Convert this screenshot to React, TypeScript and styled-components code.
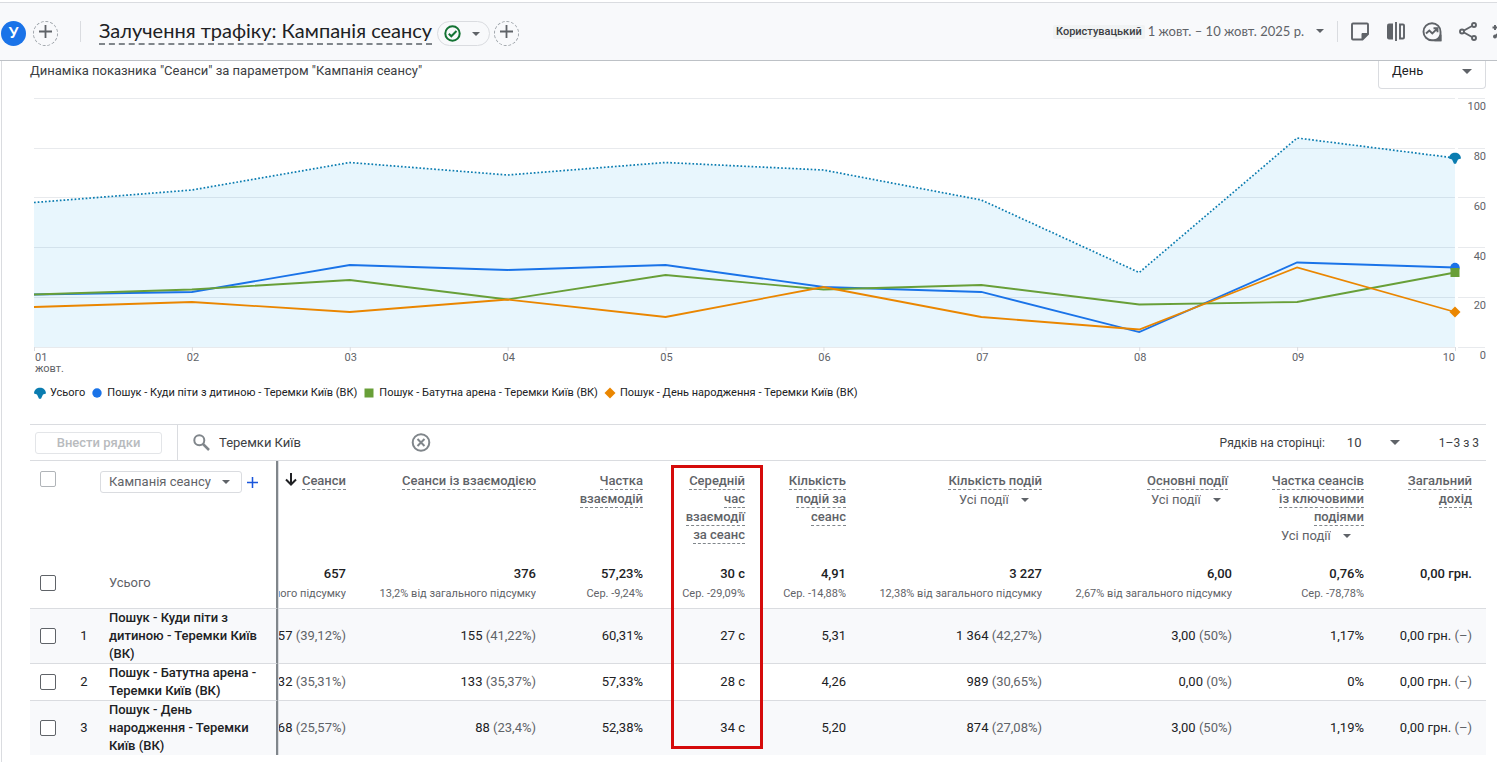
import React from "react";
import styled, { createGlobalStyle, css } from "styled-components";

const Global = createGlobalStyle`
  * { box-sizing: border-box; }
  body { margin: 0; background: #fff; color: #202124; font-family: Roboto, "Liberation Sans", sans-serif; font-size: 13px; line-height: 18px; overflow-x: hidden; }
  button, input, select { font: inherit; color: inherit; margin: 0; }
`;

const Header = styled.header`
  display: flex;
  align-items: center;
  justify-content: space-between;
  margin-top: 2px;
  height: 59px;
  padding-left: 1px;
  border-top: 1px solid #dadce0;
  border-bottom: 1px solid #bdc1c6;
  background: #f8f9fb;
  overflow: hidden;
`;
const HeaderGroup = styled.div`
  display: flex;
  align-items: center;
  white-space: nowrap;
`;
const Avatar = styled.button`
  width: 25px;
  height: 25px;
  margin-top: 4px;
  padding: 0 0 3px;
  border: 0;
  border-radius: 50%;
  background: #1a73e8;
  color: #fff;
  font-family: Lato, sans-serif;
  font-size: 15px;
  font-weight: 700;
`;
const AddButton = styled.button<{ $spaced?: boolean }>`
  display: grid;
  place-items: center;
  width: 25px;
  height: 25px;
  margin-top: 4px;
  ${(p) => p.$spaced && "margin-left: 7px; margin-right: 22px;"}
  padding: 0 0 4px;
  border: 1px dashed #9aa0a6;
  border-radius: 50%;
  background: none;
  color: #5f6368;
`;
const Divider = styled.span`
  width: 1px;
  height: 21px;
  background: #dadce0;
`;
const Title = styled.h1`
  margin: 0 5px 0 18px;
  padding-bottom: 1px;
  border-bottom: 2px dashed #80868b;
  font-family: Lato, Roboto, sans-serif;
  font-size: 20px;
  line-height: 24px;
  font-weight: 400;
`;
const StatusPill = styled.button`
  display: flex;
  align-items: center;
  justify-content: space-between;
  width: 53px;
  height: 25px;
  margin: 4px 4px 0 0;
  padding: 0 9px 0 6px;
  border: 1px solid #dadce0;
  border-radius: 13px;
  background: none;
  color: #5f6368;
`;
const RangeTag = styled.span`
  padding: 0 3px;
  border-radius: 2px;
  background: #f1f3f4;
  font-size: 11px;
  line-height: 14px;
  font-weight: 500;
  color: #3c4043;
`;
const DateButton = styled.button`
  display: flex;
  align-items: center;
  gap: 12px;
  margin: 0 13px 0 3px;
  padding: 0 0 1px;
  border: 0;
  background: none;
  font-family: Lato, Roboto, sans-serif;
  color: #5f6368;
`;
const Tools = styled.div`
  display: flex;
  align-items: center;
  gap: 12px;
  margin: 0 -19px 0 10px;
`;
const IconButton = styled.button`
  display: grid;
  place-items: center;
  width: 24px;
  height: 24px;
  padding: 0;
  border: 0;
  background: none;
  color: #5f6368;
`;

const Card = styled.main`
  margin-left: 1px;
  border-left: 1px solid #dadce0;
  padding: 0 11px 7px 28px;
`;
const ChartHead = styled.div`
  display: flex;
  align-items: flex-start;
  justify-content: space-between;
`;
const ChartTitle = styled.h2`
  margin: 1px 0 0;
  font-size: 13px;
  line-height: 18px;
  font-weight: 400;
  color: #3c4043;
`;
const SelectWrap = styled.span`
  display: inline-flex;
  align-items: center;
  svg { flex: none; pointer-events: none; color: #5f6368; }
`;
const BareSelect = styled.select`
  appearance: none;
  border: 0;
  padding: 0;
  background: none;
`;
const PeriodBox = styled(SelectWrap)`
  justify-content: space-between;
  width: 108px;
  height: 28px;
  padding: 0 13px 7px;
  border: 1px solid #dadce0;
  border-top: 0;
  border-radius: 0 0 4px 4px;
`;

const Chart = styled.svg`
  display: block;
  width: 100%;
  height: 290px;
  overflow: visible;
  font-size: 11px;
  fill: #5f6368;
`;
const Plot = styled.svg`
  width: calc(100% - 35px);
  overflow: visible;
`;
const Legend = styled.ul`
  display: flex;
  flex-wrap: wrap;
  gap: 6px;
  margin: 0;
  padding: 5px 0 22px 4px;
  list-style: none;
`;
const LegendItem = styled.li`
  display: flex;
  align-items: center;
  gap: 4px;
  font-size: 11px;
  line-height: 18px;
  svg { overflow: visible; }
`;

const Toolbar = styled.div`
  display: flex;
  align-items: center;
  height: 37px;
  border: solid #dadce0;
  border-width: 1px 0;
`;
const PlotButton = styled.button`
  width: 127px;
  height: 22px;
  margin: 0 15px 0 5px;
  padding: 0;
  border: 1px solid #e3e5e8;
  border-radius: 3px;
  background: #fff;
  font-weight: 500;
  color: #b8bbbe;
`;
const SearchBox = styled.div`
  display: flex;
  flex: 1;
  align-items: center;
  height: 100%;
  padding-left: 15px;
  border-left: 1px solid #dadce0;
  color: #80868b;
`;
const SearchInput = styled.input`
  width: 190px;
  padding: 0;
  margin-left: 9px;
  border: 0;
  outline: 0;
  background: none;
  color: #3c4043;
`;
const Pager = styled.div`
  display: flex;
  align-items: center;
  padding-right: 7px;
  font-size: 12px;
  color: #3c4043;
`;
const PageSize = styled(SelectWrap)`
  justify-content: space-between;
  width: 53px;
  margin: 0 39px 0 22px;
  font-size: 13px;
`;

const Table = styled.table`
  width: 100%;
  table-layout: fixed;
  border-collapse: separate;
  border-spacing: 0;
`;
const cell = css<{ $first?: boolean }>`
  padding: 0 14px 0 0;
  text-align: right;
  ${(p) => p.$first && "border-left: 1px solid #dadce0;"}
`;
const Metric = styled.th<{ $first?: boolean; $inset?: boolean }>`
  ${cell}
  position: relative;
  z-index: 1;
  height: 97px;
  padding-top: 11px;
  ${(p) => p.$inset && "padding-right: 18px;"}
  vertical-align: top;
  font-weight: 500;
  white-space: nowrap;
  color: #5f6368;
`;
const MetricLabel = styled.span`
  padding-bottom: 1px;
  border-bottom: 1px dashed #80868b;
`;
const EventFilter = styled(SelectWrap)<{ $inset?: boolean }>`
  display: flex;
  justify-content: flex-end;
  gap: 12px;
  margin: 1px ${(p) => (p.$inset ? 7 : 13)}px 0 0;
  font-weight: 400;
`;
const SortIcon = styled.span`
  margin-right: 5px;
  color: #202124;
  svg { vertical-align: -1px; }
`;
const CheckCell = styled.td`
  padding: 0 0 0 10px;
`;
const IndexCell = styled.td`
  padding: 0;
  text-align: center;
`;
const NameCell = styled.td<{ $plain?: boolean }>`
  padding: 0 8px 0 7px;
  border-right: 2px solid #80868b;
  font-weight: ${(p) => (p.$plain ? 400 : 500)};
  color: ${(p) => (p.$plain ? "#5f6368" : "#202124")};
`;
const ValueCell = styled.td<{ $first?: boolean }>`
  ${cell}
`;
const Clip = styled.div`
  display: flex;
  flex-direction: column;
  align-items: flex-end;
  overflow: hidden;
  white-space: nowrap;
`;
const TotalClip = styled(Clip)`
  padding-top: 4px;
`;
const TotalValue = styled.strong`
  font-weight: 500;
`;
const Note = styled.span`
  font-size: 11px;
  line-height: 22px;
  color: #5f6368;
`;
const Share = styled.span`
  color: #5f6368;
`;
const HeadRow = styled.tr`
  ${CheckCell}, ${NameCell} { vertical-align: top; padding-top: 10px; }
`;
const TotalRow = styled.tr`
  height: 51px;
  td { border-bottom: 1px solid #dadce0; }
`;
const DataRow = styled.tr`
  &:nth-child(even) { background: #f8f9fb; }
  &:not(:last-child) td { border-bottom: 1px solid #dadce0; }
`;
const CheckBox = styled.input<{ $light?: boolean }>`
  appearance: none;
  display: block;
  width: 16px;
  height: 16px;
  border: 1px solid ${(p) => (p.$light ? "#b0b4b8" : "#5f6368")};
  border-radius: 2px;
  background: #fff;
`;
const DimensionBar = styled.div`
  display: flex;
  align-items: center;
  gap: 3px;
  margin-left: -9px;
`;
const DimensionBox = styled(SelectWrap)`
  justify-content: space-between;
  width: 142px;
  height: 22px;
  padding: 0 11px 0 8px;
  border: 1px solid #dadce0;
  border-radius: 3px;
  color: #5f6368;
`;
const PlusButton = styled(IconButton)`
  width: 14px;
  height: 14px;
  color: #1a56db;
`;
const Highlight = styled.span`
  position: absolute;
  top: 4px;
  left: 14px;
  right: -4px;
  height: 284px;
  border: 3px solid #d50b0b;
  pointer-events: none;
`;

const Caret = ({ size = 8 }: { size?: number }) => (
  <svg width={size} height={size / 2} viewBox="0 0 8 4" fill="currentColor" aria-hidden="true">
    <path d="M0 0h8L4 4z" />
  </svg>
);
const Plus = ({ size = 13 }: { size?: number }) => (
  <svg width={size} height={size} viewBox="0 0 13 13" stroke="currentColor" strokeWidth="1.8" aria-hidden="true">
    <path d="M0 6.5h13M6.5 0v13" />
  </svg>
);

type Shape = "umbrella" | "circle" | "square" | "diamond";
const Mark = ({ shape }: { shape: Shape }) => {
  if (shape === "umbrella") return <path d="M-6 .5C-5.700-3.500-3-5.200 0-5.200S5.700-3.500 6 .5L3 1.500 1 5.800h-2L-3 1.500z" fill="#0a7cb0" />;
  if (shape === "circle") return <circle r="4.7" fill="#1a73e8" />;
  if (shape === "square") return <path d="M-4.500-4.500h9v9h-9z" fill="#689f38" />;
  return <path d="M0-5.500L5.500 0 0 5.500-5.500 0z" fill="#ea8600" />;
};

const series: { name: string; shape: Shape; color: string; values: number[] }[] = [
  { name: "Усього", shape: "umbrella", color: "#0a7cb0", values: [58, 63, 74, 69, 74, 71, 59, 30, 84, 76] },
  { name: "Пошук - Куди піти з дитиною - Теремки Київ (ВК)", shape: "circle", color: "#1a73e8", values: [21, 22, 33, 31, 33, 24, 22, 6, 34, 32] },
  { name: "Пошук - Батутна арена - Теремки Київ (ВК)", shape: "square", color: "#689f38", values: [21, 23, 27, 19, 29, 23, 25, 17, 18, 30] },
  { name: "Пошук - День народження - Теремки Київ (ВК)", shape: "diamond", color: "#ea8600", values: [16, 18, 14, 19, 12, 24, 12, 7, 32, 14] },
];

/* The plot spans the card less 4px on the left and 31px for the scale on the right. */
const TOP = 9;
const PLOT = 249;
const BASE = TOP + PLOT;
const TICKS = [0, 20, 40, 60, 80, 100];
const yOf = (v: number) => Math.round((BASE - (v * PLOT) / 100) * 2) / 2;
const gridY = (v: number) => Math.floor(yOf(v)) + 0.5;
const pointsOf = (values: number[]) => values.map((v, i) => `${i * 100},${yOf(v)}`).join(" ");

const TrafficChart = () => (
  <Chart role="img" aria-label="Динаміка сеансів">
    <Plot x="4" y="0" height="290">
      {TICKS.map((v) => (
        <line key={v} x1="0" x2="100%" y1={gridY(v)} y2={gridY(v)} stroke="#e8eaed" />
      ))}
      <svg width="100%" height="290" viewBox="0 0 900 290" preserveAspectRatio="none" overflow="visible">
        <polygon points={`0,${BASE} ${pointsOf(series[0].values)} 900,${BASE}`} fill="#039be5" fillOpacity="0.09" />
        {series.map((s, i) => (
          <polyline
            key={s.name}
            points={pointsOf(s.values)}
            fill="none"
            stroke={s.color}
            strokeWidth={i ? 1.8 : 1.7}
            strokeDasharray={i ? undefined : "1.7 2"}
            vectorEffect="non-scaling-stroke"
          />
        ))}
      </svg>
      {series[0].values.map((_, i) => (
        <svg key={i} x={`${(i * 100) / 9}%`} overflow="visible">
          <path d={`M.5 ${BASE}v4`} stroke="#dadce0" />
          <text x={i === 9 ? 0 : 1} y={BASE + 14} textAnchor={i === 0 ? "start" : i === 9 ? "end" : "middle"}>
            {String(i + 1).padStart(2, "0")}
          </text>
          {i === 0 && <text x="1" y={BASE + 25}>жовт.</text>}
        </svg>
      ))}
      <svg x="100%" overflow="visible">
        {series.map((s) => (
          <g key={s.name} transform={`translate(0 ${yOf(s.values[9])})`}>
            <Mark shape={s.shape} />
          </g>
        ))}
        {TICKS.map((v) => (
          <g key={v}>
            <path d={`M3 ${gridY(v)}h27`} stroke="#e8eaed" />
            <text x="31" y={yOf(v) + 12} textAnchor="end">{v}</text>
          </g>
        ))}
      </svg>
    </Plot>
  </Chart>
);

const metrics = [
  { lines: ["Сеанси"], width: 82 },
  { lines: ["Сеанси із взаємодією"], width: 190 },
  { lines: ["Частка", "взаємодій"], width: 107 },
  { lines: ["Середній", "час", "взаємодії", "за сеанс"], width: 102, highlight: true },
  { lines: ["Кількість", "подій за", "сеанс"], width: 101 },
  { lines: ["Кількість подій"], width: 196, events: true },
  { lines: ["Основні події"], width: 190, events: true, inset: true },
  { lines: ["Частка сеансів", "із ключовими", "подіями"], width: 132, events: true },
  { lines: ["Загальний", "дохід"], width: 108 },
];
const totals = [
  ["657", "12,9% від загального підсумку"],
  ["376", "13,2% від загального підсумку"],
  ["57,23%", "Сер. -9,24%"],
  ["30 с", "Сер. -29,09%"],
  ["4,91", "Сер. -14,88%"],
  ["3 227", "12,38% від загального підсумку"],
  ["6,00", "2,67% від загального підсумку"],
  ["0,76%", "Сер. -78,78%"],
  ["0,00 грн.", "\u00a0"],
];
const rows: { name: string; cells: [string, string?][] }[] = [
  { name: series[1].name, cells: [["257", "(39,12%)"], ["155", "(41,22%)"], ["60,31%"], ["27 с"], ["5,31"], ["1 364", "(42,27%)"], ["3,00", "(50%)"], ["1,17%"], ["0,00 грн.", "(–)"]] },
  { name: series[2].name, cells: [["232", "(35,31%)"], ["133", "(35,37%)"], ["57,33%"], ["28 с"], ["4,26"], ["989", "(30,65%)"], ["0,00", "(0%)"], ["0%"], ["0,00 грн.", "(–)"]] },
  { name: series[3].name, cells: [["168", "(25,57%)"], ["88", "(23,4%)"], ["52,38%"], ["34 с"], ["5,20"], ["874", "(27,08%)"], ["3,00", "(50%)"], ["1,19%"], ["0,00 грн.", "(–)"]] },
];

const Icon = ({ children }: { children: React.ReactNode }) => (
  <svg width="24" height="24" viewBox="0 0 24 24" fill="none" stroke="currentColor" strokeWidth="1.9" aria-hidden="true">
    {children}
  </svg>
);

export default function App() {
  return (
    <>
      <Global />
      <Header>
        <HeaderGroup>
          <Avatar aria-label="Усі користувачі">У</Avatar>
          <AddButton $spaced aria-label="Додати порівняння"><Plus /></AddButton>
          <Divider />
          <Title>Залучення трафіку: Кампанія сеансу</Title>
          <StatusPill aria-label="Стан даних">
            <svg width="17" height="17" viewBox="0 0 17 17" fill="none" stroke="#137333" strokeWidth="2" aria-hidden="true">
              <circle cx="8.500" cy="8.500" r="7.200" />
              <path d="M4.800 8.800l2.500 2.500 5.200-5.300" />
            </svg>
            <Caret />
          </StatusPill>
          <AddButton aria-label="Додати фільтр"><Plus /></AddButton>
        </HeaderGroup>
        <HeaderGroup>
          <RangeTag>Користувацький</RangeTag>
          <DateButton>1 жовт. – 10 жовт. 2025 р. <Caret /></DateButton>
          <Divider />
          <Tools>
            <IconButton aria-label="Нотатки">
              <Icon><path d="M5 3.500h14q1 0 1 1v9.500l-5.500 5.500H5q-1 0-1-1v-14q0-1 1-1z" /><path d="M20 13.500l-6 6v-6z" fill="currentColor" strokeWidth="1" /></Icon>
            </IconButton>
            <IconButton aria-label="Порівняння">
              <Icon><path d="M5 3.500h4v16H5q-2 0-2-2v-12q0-2 2-2z" fill="currentColor" stroke="none" /><path d="M12 2v19" /><path d="M16 4.500h3q1 0 1 1v12q0 1-1 1h-3z" /></Icon>
            </IconButton>
            <IconButton aria-label="Статистика">
              <Icon><path d="M12 20.200a8.500 8.500 0 1 1 8.500-8.500v8.500z" /><path d="M14.500 20.200q4.500-1 6-5.500v5.500z" fill="currentColor" /><path d="M6 13.500l3.300-3 3 3 4.700-4.700M13.500 8.300h4v4" /></Icon>
            </IconButton>
            <IconButton aria-label="Поділитися">
              <Icon><circle cx="18" cy="5" r="2" /><circle cx="6" cy="11.500" r="2" /><circle cx="18" cy="18" r="2" /><path d="M8 10.500l8-4.500M8 12.500l8 4.500" /></Icon>
            </IconButton>
            <IconButton aria-label="Аналіз">
              <Icon><path d="M3 5v5M.5 7.500h5M2 17.500l5-5 4 4 8-9" /><circle cx="3" cy="16.500" r="1" /></Icon>
            </IconButton>
          </Tools>
        </HeaderGroup>
      </Header>
      <Card>
        <ChartHead>
          <ChartTitle>Динаміка показника "Сеанси" за параметром "Кампанія сеансу"</ChartTitle>
          <PeriodBox>
            <BareSelect aria-label="Період"><option>День</option></BareSelect>
            <Caret size={10} />
          </PeriodBox>
        </ChartHead>
        <TrafficChart />
        <Legend>
          {series.map((s) => (
            <LegendItem key={s.name}>
              <svg width="12" height="12" viewBox="-6 -6 12 12" aria-hidden="true"><Mark shape={s.shape} /></svg>
              {s.name}
            </LegendItem>
          ))}
        </Legend>
        <Toolbar>
          <PlotButton disabled>Внести рядки</PlotButton>
          <SearchBox>
            <svg width="17" height="17" viewBox="0 0 17 17" fill="none" stroke="currentColor" strokeWidth="2" aria-hidden="true">
              <circle cx="6.300" cy="6.300" r="5" /><path d="M10 10l6 6" strokeWidth="2.500" />
            </svg>
            <SearchInput aria-label="Пошук" defaultValue="Теремки Київ" />
            <IconButton aria-label="Очистити">
              <svg width="20" height="20" viewBox="0 0 20 20" fill="none" stroke="#80868b" strokeWidth="2" aria-hidden="true">
                <circle cx="10" cy="9.500" r="8.300" /><path d="M6.500 6l7 7M13.500 6l-7 7" />
              </svg>
            </IconButton>
          </SearchBox>
          <Pager>
            <label htmlFor="page-size">Рядків на сторінці:</label>
            <PageSize>
              <BareSelect id="page-size"><option>10</option></BareSelect>
              <Caret size={10} />
            </PageSize>
            <span>1–3 з 3</span>
          </Pager>
        </Toolbar>
        <Table>
          <colgroup>
            <col width="36" /><col width="36" /><col width="176" />
            {metrics.map((m, i) => <col key={i} width={m.width} />)}
          </colgroup>
          <thead>
            <HeadRow>
              <CheckCell><CheckBox $light type="checkbox" aria-label="Вибрати всі" /></CheckCell>
              <IndexCell />
              <NameCell $plain>
                <DimensionBar>
                  <DimensionBox>
                    <BareSelect aria-label="Параметр"><option>Кампанія сеансу</option></BareSelect>
                    <Caret />
                  </DimensionBox>
                  <PlusButton aria-label="Додати параметр"><Plus size={11} /></PlusButton>
                </DimensionBar>
              </NameCell>
              {metrics.map((m, i) => (
                <Metric key={i} scope="col" $first={i === 0} $inset={m.inset}>
                  {i === 0 && (
                    <SortIcon>
                      <svg width="12" height="13" viewBox="0 0 12 13" fill="none" stroke="currentColor" strokeWidth="2" aria-hidden="true">
                        <path d="M6 0v11M1 6.500l5 5 5-5" />
                      </svg>
                    </SortIcon>
                  )}
                  {m.lines.map((line, j) => (
                    <React.Fragment key={line}>
                      {j > 0 && <br />}
                      <MetricLabel>{line}</MetricLabel>
                    </React.Fragment>
                  ))}
                  {m.events && (
                    <EventFilter $inset={m.inset}>
                      <BareSelect aria-label={m.lines.join(" ")}><option>Усі події</option></BareSelect>
                      <Caret />
                    </EventFilter>
                  )}
                  {m.highlight && <Highlight />}
                </Metric>
              ))}
            </HeadRow>
          </thead>
          <tbody>
            <TotalRow>
              <CheckCell><CheckBox type="checkbox" aria-label="Усього" /></CheckCell>
              <IndexCell />
              <NameCell $plain>Усього</NameCell>
              {totals.map(([value, note], i) => (
                <ValueCell key={i} $first={i === 0}>
                  <TotalClip><TotalValue>{value}</TotalValue><Note>{note}</Note></TotalClip>
                </ValueCell>
              ))}
            </TotalRow>
            {rows.map((r, n) => (
              <DataRow key={r.name}>
                <CheckCell><CheckBox type="checkbox" aria-label={r.name} /></CheckCell>
                <IndexCell>{n + 1}</IndexCell>
                <NameCell>{r.name}</NameCell>
                {r.cells.map(([value, share], i) => (
                  <ValueCell key={i} $first={i === 0}>
                    <Clip><span>{value}{share && <Share> {share}</Share>}</span></Clip>
                  </ValueCell>
                ))}
              </DataRow>
            ))}
          </tbody>
        </Table>
      </Card>
    </>
  );
}
